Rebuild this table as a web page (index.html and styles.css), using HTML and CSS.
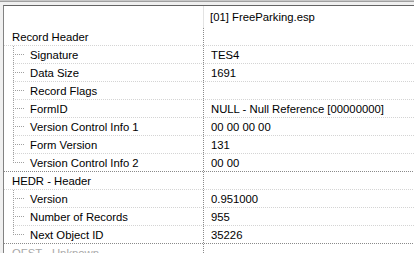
FILE: index.html
```html
<!DOCTYPE html>
<html lang="en">
<head>
<meta charset="utf-8">
<title>Record View</title>
<link rel="stylesheet" href="styles.css">
</head>
<body>
<div class="window-edge"></div>
<div class="tree">
  <div class="hdr">
    <div class="c1"></div>
    <div class="c2">[01] FreeParking.esp</div>
  </div>

  <div class="row group">
    <div class="c1">Record Header</div><div class="c2"></div>
  </div>
  <div class="row child">
    <div class="c1">Signature</div><div class="c2">TES4</div>
  </div>
  <div class="row child">
    <div class="c1">Data Size</div><div class="c2">1691</div>
  </div>
  <div class="row child">
    <div class="c1">Record Flags</div><div class="c2"></div>
  </div>
  <div class="row child">
    <div class="c1">FormID</div><div class="c2">NULL - Null Reference [00000000]</div>
  </div>
  <div class="row child">
    <div class="c1">Version Control Info 1</div><div class="c2">00 00 00 00</div>
  </div>
  <div class="row child">
    <div class="c1">Form Version</div><div class="c2">131</div>
  </div>
  <div class="row child last">
    <div class="c1">Version Control Info 2</div><div class="c2">00 00</div>
  </div>

  <div class="row group">
    <div class="c1">HEDR - Header</div><div class="c2"></div>
  </div>
  <div class="row child">
    <div class="c1">Version</div><div class="c2">0.951000</div>
  </div>
  <div class="row child">
    <div class="c1">Number of Records</div><div class="c2">955</div>
  </div>
  <div class="row child last">
    <div class="c1">Next Object ID</div><div class="c2">35226</div>
  </div>

  <div class="row group muted">
    <div class="c1">OFST - Unknown</div><div class="c2"></div>
  </div>
</div>
</body>
</html>
```

FILE: styles.css
```css
html, body {
  margin: 0;
  padding: 0;
  background: #f0f0f0;
  overflow: hidden;
}

body {
  font-family: "Liberation Sans", Arial, sans-serif;
  font-size: 11.3px;
  color: #000;
}

/* thin frame lines above the tree control */
.window-edge {
  height: 2px;
  border-top: 1px solid #c8c8c8;
  border-bottom: 1px solid #a0a0a0;
  box-sizing: border-box;
  margin-bottom: 3px;
}

.tree {
  margin-left: 3px;
  border-top: 1px solid #646464;
  border-left: 1px solid #828282;
  background: #fff;
  height: 260px;
}

.hdr,
.row {
  display: grid;
  grid-template-columns: 199px 1fr;
}

.hdr {
  height: 22px;
}

.hdr .c2 {
  border-left: 1px solid #e3e3e3;
  padding-left: 6px;
  line-height: 23px;
}

.row {
  position: relative;
  height: 18px;
  line-height: 18px;
}

.row .c1,
.row .c2 {
  white-space: nowrap;
  overflow: hidden;
}

.row .c1 {
  position: relative;
  padding-left: 8px;
}

/* dotted column divider */
.row .c2 {
  padding-left: 8px;
  background-image: linear-gradient(to bottom, #8a8a8a 50%, transparent 50%);
  background-size: 1px 2px;
  background-repeat: repeat-y;
  background-position: 0 0;
}

/* horizontal grid line under each row */
.row::after {
  content: "";
  position: absolute;
  left: 0;
  right: 0;
  bottom: 0;
  height: 1px;
  background-image: linear-gradient(to right, #d4d4d4 50%, transparent 50%);
  background-size: 2px 1px;
}

.row.child::after {
  left: 9px;
}

.row.last::after {
  left: 0;
  background-image: linear-gradient(to right, #8a8a8a 50%, transparent 50%);
}

.row.child .c1 {
  padding-left: 26px;
}

/* tree connector lines */
.row.child .c1::before {
  content: "";
  position: absolute;
  left: 9px;
  top: 0;
  bottom: 0;
  width: 1px;
  background-image: linear-gradient(to bottom, #a0a0a0 50%, transparent 50%);
  background-size: 1px 2px;
}

.row.child.last .c1::before {
  bottom: auto;
  height: 9px;
}

.row.child .c1::after {
  content: "";
  position: absolute;
  left: 11px;
  top: 8px;
  width: 10px;
  height: 1px;
  background-image: linear-gradient(to right, #a0a0a0 50%, transparent 50%);
  background-size: 2px 1px;
}

.row.muted {
  color: #a8a8a8;
}
```
